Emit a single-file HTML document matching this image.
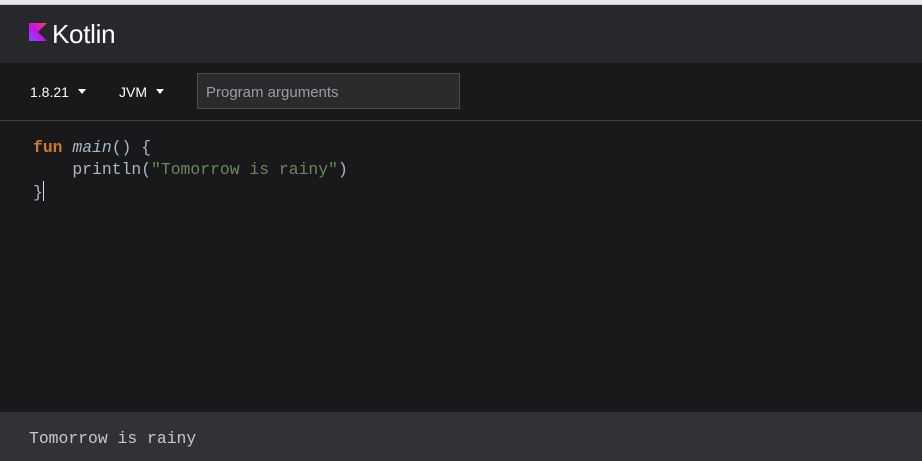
<!DOCTYPE html>
<html><head><style>
body{margin:0;width:922px;height:461px;background:#19191c;overflow:hidden;font-family:"Liberation Sans",sans-serif}
.top{height:5px;background:#e8e8e8;border-bottom:1px solid #ccc;box-sizing:border-box}
.hdr{position:absolute;top:5px;left:0;width:922px;height:58px;background:#27282c}
.logo{position:absolute;left:29px;top:18px}
.kt{position:absolute;left:52px;top:14px;color:#fff;font-size:26px;letter-spacing:-0.3px}
.tb{position:absolute;top:63px;left:0;width:922px;height:57px;background:#19191c;border-bottom:1px solid #3f4043}
.sel{position:absolute;top:21px;color:#fff;font-size:14px}
.tri{display:inline-block;width:0;height:0;border-left:4.5px solid transparent;border-right:4.5px solid transparent;border-top:5px solid #fff;margin-left:9px;vertical-align:3px}
.inp{position:absolute;left:197px;top:10px;width:253px;height:34px;border:1px solid #4d4e52;background:#2b2b2e;color:#9b9ca0;font-size:15px;line-height:37px;padding-left:8px;box-sizing:content-box}
.code{position:absolute;left:33px;top:137px;font-family:"Liberation Mono",monospace;font-size:16.4px;line-height:22px;color:#a9b7c6;white-space:pre}
.k{color:#cc7832;font-weight:bold}.f{color:#a9b7c6;font-style:italic}.s{color:#6a8759}
.cur{display:inline-block;width:1px;height:20px;background:#ddd;vertical-align:-4px}
.out{position:absolute;top:412px;left:0;width:922px;height:49px;background:#313236}
.ot{position:absolute;left:29px;top:17px;font-family:"Liberation Mono",monospace;font-size:16.4px;color:#c5c7ca}
</style></head><body>
<div class="top"></div>
<div class="hdr">
<svg class="logo" width="18" height="18" viewBox="0 0 18 18"><defs><linearGradient id="g" x1="0" y1="1" x2="1" y2="0"><stop offset="0" stop-color="#7f52ff"/><stop offset=".5" stop-color="#c811e2"/><stop offset="1" stop-color="#e54857"/></linearGradient></defs><path d="M0 0H18L9 9L18 18H0Z" fill="url(#g)"/></svg>
<div class="kt">Kotlin</div>
</div>
<div class="tb">
<div class="sel" style="left:30px">1.8.21<span class="tri"></span></div>
<div class="sel" style="left:119px">JVM<span class="tri"></span></div>
<div class="inp">Program arguments</div>
</div>
<div class="code"><span class="k">fun</span> <span class="f">main</span>() {
    println(<span class="s">"Tomorrow is rainy"</span>)
}<span class="cur"></span></div>
<div class="out"><div class="ot">Tomorrow is rainy</div></div>
</body></html>
